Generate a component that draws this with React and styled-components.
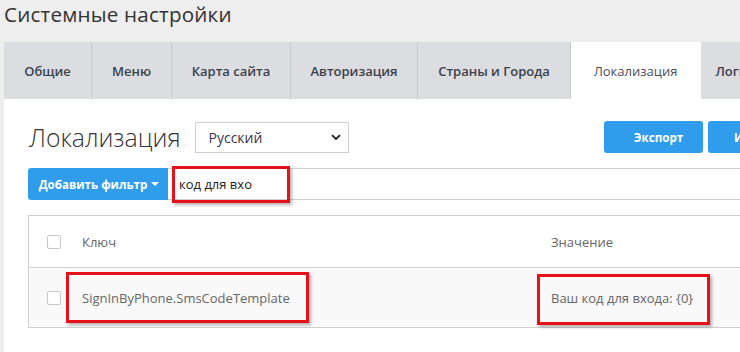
import React from "react";
import styled, { createGlobalStyle } from "styled-components";

const Global = createGlobalStyle`
  html, body { margin: 0; padding: 0; background: #eeeeee; overflow: hidden; }
  body { font-family: "Open Sans", "Liberation Sans", sans-serif; color: #333; }
  * { box-sizing: border-box; }
`;

const Page = styled.div`
  width: 832px;
  padding-left: 4px;
`;

const Title = styled.h1`
  margin: 0;
  font-size: 20.6px;
  font-weight: 400;
  line-height: 28px;
  height: 42px;
  color: #333;
  letter-spacing: 0.2px;
`;

const Tabs = styled.div`
  display: flex;
  height: 57px;
  background: #dcdde0;
`;

const Tab = styled.div`
  flex: none;
  width: ${(p) => p.$w}px;
  display: flex;
  align-items: center;
  justify-content: center;
  font-size: 13px;
  font-weight: ${(p) => (p.$active ? 400 : 600)};
  color: ${(p) => (p.$active ? "#4a4f5a" : "#3b414d")};
  background: ${(p) => (p.$active ? "#fff" : "#dcdde0")};
  border-right: 1px solid ${(p) => (p.$active ? "#fff" : "#c8cacd")};
  white-space: nowrap;
`;

const Panel = styled.div`
  background: #fff;
  padding: 22px 25px 30px 24px;
  height: 260px;
`;

const Toolbar = styled.div`
  display: flex;
  align-items: center;
  height: 32px;
`;

const Heading = styled.h2`
  margin: 0 14px 0 1px;
  font-size: 24.8px;
  font-weight: 300;
  color: #333;
  line-height: 32px;
`;

const SelectBox = styled.div`
  position: relative;
  width: 154px;
  height: 31px;
  border: 1px solid #cfcfcf;
  display: flex;
  align-items: center;
  padding-left: 13px;
  font-size: 14px;
  color: #3a3550;
`;

const Chevron = styled.svg`
  position: absolute;
  right: 7px;
  top: 11px;
`;

const Spacer = styled.div`
  flex: 1;
`;

const Button = styled.button`
  width: ${(p) => p.$w || 99}px;
  height: 32px;
  margin-left: ${(p) => p.$ml || 0}px;
  margin-right: ${(p) => p.$mr || 0}px;
  border: none;
  border-radius: 3px;
  background: #2f9deb;
  color: #fff;
  font-family: inherit;
  font-size: 11.6px;
  font-weight: 700;
  padding: 0 0 0 10px;
`;

const FilterRow = styled.div`
  display: flex;
  margin-top: 15px;
  height: 32px;
`;

const FilterButton = styled.button`
  width: 140px;
  height: 32px;
  border: none;
  border-radius: 3px 0 0 3px;
  background: #2f9deb;
  color: #fff;
  font-family: inherit;
  font-size: 11.6px;
  font-weight: 700;
  display: flex;
  align-items: center;
  justify-content: center;
  gap: 4px;
  padding: 0 0 0 2px;
`;

const Caret = styled.span`
  width: 0;
  height: 0;
  border-left: 4px solid transparent;
  border-right: 4px solid transparent;
  border-top: 4px solid #fff;
`;

const FilterInput = styled.div`
  flex: 1;
  border: 1px solid #cfcfcf;
  border-left: none;
  display: flex;
  align-items: center;
  padding-left: 11px;
  font-size: 13px;
  color: #222;
`;

const Table = styled.div`
  margin-top: 15px;
  border: 1px solid #d0d0d0;
  border-right: none;
`;

const Row = styled.div`
  display: grid;
  grid-template-columns: 53px 469px 1fr;
  align-items: center;
  height: ${(p) => (p.$head ? 51 : 60)}px;
  background: ${(p) => (p.$head ? "#fff" : "#f9f9f9")};
  border-top: ${(p) => (p.$head ? "none" : "1px solid #d0d0d0")};
  font-size: 13px;
  color: #666;
`;

const CheckCell = styled.div`
  padding-left: 18px;
  display: flex;
  align-items: center;
`;

const Checkbox = styled.span`
  width: 14px;
  height: 14px;
  border: 1px solid #c8c8c8;
  border-radius: 2px;
  background: #fff;
`;

const Cell = styled.div`
  line-height: 20px;
`;

const Highlight = styled.span`
  position: relative;
  display: inline-block;
  line-height: 20px;
  &::after {
    content: "";
    position: absolute;
    top: ${(p) => p.$t}px;
    bottom: ${(p) => p.$b}px;
    left: ${(p) => p.$l}px;
    right: ${(p) => p.$r}px;
    border: 3px solid #e5121c;
    box-shadow: 2px 2px 3px rgba(0, 0, 0, 0.3);
    pointer-events: none;
  }
`;

const tabs = [
  ["Общие", 88],
  ["Меню", 80],
  ["Карта сайта", 119],
  ["Авторизация", 127],
  ["Страны и Города", 153],
  ["Локализация", 130, true],
  ["Логирование", 118],
];

export default function App() {
  return (
    <>
      <Global />
      <Page>
        <Title>Системные настройки</Title>
        <Tabs>
          {tabs.map(([t, w, a]) => (
            <Tab key={t} $w={w} $active={a}>
              {t}
            </Tab>
          ))}
        </Tabs>
        <Panel>
          <Toolbar>
            <Heading>Локализация</Heading>
            <SelectBox>
              Русский
              <Chevron width="10" height="7" viewBox="0 0 10 7">
                <path d="M1 1.2 L5 5 L9 1.2" fill="none" stroke="#222" strokeWidth="1.8" />
              </Chevron>
            </SelectBox>
            <Spacer />
            <Button>Экспорт</Button>
            <Button $ml={5} $w={90} $mr={9}>Импорт</Button>
          </Toolbar>
          <FilterRow>
            <FilterButton>
              Добавить фильтр <Caret />
            </FilterButton>
            <FilterInput>
              <Highlight $t={-8} $b={-9} $l={-7} $r={-38}>код для вхо</Highlight>
            </FilterInput>
          </FilterRow>
          <Table>
            <Row $head>
              <CheckCell>
                <Checkbox />
              </CheckCell>
              <Cell>Ключ</Cell>
              <Cell>Значение</Cell>
            </Row>
            <Row>
              <CheckCell>
                <Checkbox />
              </CheckCell>
              <Cell>
                <Highlight $t={-16} $b={-15} $l={-16} $r={-19}>
                  SignInByPhone.SmsCodeTemplate
                </Highlight>
              </Cell>
              <Cell>
                <Highlight $t={-14} $b={-17} $l={-14} $r={-17}>
                  Ваш код для входа: {"{0}"}
                </Highlight>
              </Cell>
            </Row>
          </Table>
        </Panel>
      </Page>
    </>
  );
}
